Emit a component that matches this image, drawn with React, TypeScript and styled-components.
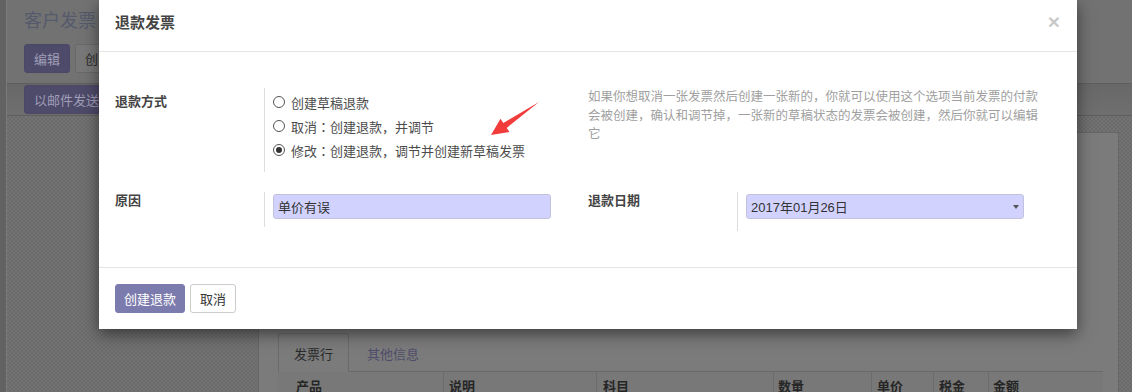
import React from "react";
import styled, { createGlobalStyle } from "styled-components";

const GlobalStyle = createGlobalStyle`
  html, body {
    margin: 0;
    padding: 0;
  }
  body {
    width: 1132px;
    height: 392px;
    overflow: hidden;
    font-family: "Liberation Sans", "Noto Sans CJK SC", sans-serif;
    font-size: 13px;
    color: #4c4c4c;
  }
`;

/* ---------- dimmed page behind the dialog ---------- */

const Page = styled.div`
  position: relative;
  display: flex;
  width: 1132px;
  height: 392px;
  overflow: hidden;
  background: #6f6f6f;
`;

const SideStrip = styled.div`
  flex: none;
  width: 6px;
  background: #626262;
  border-right: 1px solid #7a7a7a;
`;

const Main = styled.div`
  flex: 1;
  min-width: 0;
  display: flex;
  flex-direction: column;
`;

const ControlPanel = styled.div`
  flex: none;
  height: 84px;
  box-sizing: border-box;
  padding: 10px 17px 0;
  background: #727272;
  border-bottom: 1px solid #5e5e5e;
`;

const Breadcrumb = styled.div`
  font-size: 18px;
  line-height: 22px;
  color: #555a6c;
`;

const ButtonRow = styled.div`
  display: flex;
  gap: 5px;
  margin-top: 12px;
`;

const DimButton = styled.div<{ $primary?: boolean }>`
  height: 29px;
  box-sizing: border-box;
  padding: 0 9px;
  display: flex;
  align-items: center;
  border-radius: 3px;
  border: 1px solid ${(p) => (p.$primary ? "#4b4866" : "#686868")};
  background: ${(p) => (p.$primary ? "#4e4b6a" : "#787878")};
  color: ${(p) => (p.$primary ? "#a09eb8" : "#2c2c2c")};
  white-space: nowrap;
`;

const ActionBar = styled.div`
  flex: none;
  height: 32px;
  box-sizing: border-box;
  padding: 1px 17px 0;
  background: linear-gradient(#686868, #6f6f6f);
  border-bottom: 1px solid #5e5e5e;
  display: flex;
`;

const Content = styled.div`
  flex: 1;
  min-height: 0;
  display: flex;
  padding: 16px 13px 0 251px;
  background-color: #6e6e6e;
  background-image: repeating-conic-gradient(#737373 0 25%, #6b6b6b 0 50%);
  background-size: 4px 4px;
`;

const Sheet = styled.div`
  flex: 1;
  background: #7b7b7b;
  border: 1px solid #666;
  border-bottom: none;
  padding: 200px 15px 0 19px;
`;

const Tabs = styled.div`
  display: flex;
  gap: 2px;
  border-bottom: 1px solid #6a6a6a;
`;

const Tab = styled.div<{ $active?: boolean }>`
  height: 39px;
  box-sizing: border-box;
  padding: 0 15px;
  display: flex;
  align-items: center;
  border: 1px solid ${(p) => (p.$active ? "#6a6a6a" : "transparent")};
  border-bottom: none;
  border-radius: 3px 3px 0 0;
  margin-bottom: -1px;
  background: ${(p) => (p.$active ? "#7b7b7b" : "transparent")};
  color: ${(p) => (p.$active ? "#2a2a2a" : "#4f4e6a")};
`;

const TableHead = styled.div`
  display: grid;
  grid-template-columns: 165px 153px 177px 98px 62px 55px 1fr;
  height: 30px;
  background: #787878;
`;

const HeadCell = styled.div<{ $pl: number }>`
  padding-left: ${(p) => p.$pl}px;
  border-left: 1px solid #6c6c6c;
  font-weight: bold;
  color: #262626;
  line-height: 30px;
  &:first-child {
    border-left: none;
  }
`;

/* ---------- refund dialog ---------- */

const Modal = styled.div`
  position: absolute;
  left: 99px;
  top: 0;
  width: 978px;
  background: #fff;
  box-shadow: 0 5px 15px rgba(0, 0, 0, 0.5);
`;

const ModalHeader = styled.div`
  height: 52px;
  box-sizing: border-box;
  padding: 13px 16px 0;
  border-bottom: 1px solid #e5e5e5;
  display: flex;
  justify-content: space-between;
  align-items: flex-start;
`;

const ModalTitle = styled.h4`
  margin: 0;
  font-size: 15px;
  line-height: 20px;
  font-weight: bold;
  color: #444;
`;

const Close = styled.span`
  font-family: "Liberation Sans", sans-serif;
  font-size: 21px;
  font-weight: bold;
  line-height: 17px;
  color: #c9c9c9;
  margin-right: 1px;
`;

const ModalBody = styled.div`
  position: relative;
  padding: 36px 16px;
  display: grid;
  grid-template-columns: 473px 473px;
  row-gap: 20px;
`;

const Group = styled.div`
  display: grid;
  grid-template-columns: 149px 1fr;
  align-items: start;
`;

const Label = styled.div<{ $pt: number }>`
  padding-top: ${(p) => p.$pt}px;
  font-weight: bold;
  line-height: 16px;
  color: #444;
`;

const FieldCell = styled.div<{ $pb: number }>`
  border-left: 1px solid #ddd;
  padding: 2px 0 ${(p) => p.$pb}px 8px;
`;

const RadioRow = styled.div`
  display: flex;
  align-items: center;
  gap: 6px;
  height: 24px;
  white-space: nowrap;
`;

const RadioDot = styled.span<{ $checked?: boolean }>`
  flex: none;
  width: 12px;
  height: 12px;
  box-sizing: border-box;
  border: 1px solid #555;
  border-radius: 50%;
  display: flex;
  align-items: center;
  justify-content: center;
  &::after {
    content: "";
    width: 6px;
    height: 6px;
    border-radius: 50%;
    background: ${(p) => (p.$checked ? "#333" : "transparent")};
  }
`;

/* full-width colon drawn centred, as in the original font */
const Colon = styled.span`
  font-family: "Noto Sans CJK JP", sans-serif;
`;

const Help = styled.div`
  font-size: 12.5px;
  line-height: 18.5px;
  color: #a0a0a0;
  white-space: nowrap;
`;

const TextInput = styled.div`
  width: 278px;
  height: 25px;
  box-sizing: border-box;
  padding: 0 4px;
  display: flex;
  align-items: center;
  justify-content: space-between;
  background: #d2d2ff;
  border: 1px solid #c2c2dc;
  border-radius: 3px;
  color: #333;
`;

const Caret = styled.span`
  width: 0;
  height: 0;
  border-left: 3.5px solid transparent;
  border-right: 3.5px solid transparent;
  border-top: 4px solid #555;
`;

const Arrow = styled.svg`
  position: absolute;
  left: 389px;
  top: 47px;
`;

const ModalFooter = styled.div`
  border-top: 1px solid #e5e5e5;
  padding: 16px;
  display: flex;
  gap: 5px;
`;

const Button = styled.button<{ $primary?: boolean }>`
  height: 29px;
  padding: 0 ${(p) => (p.$primary ? 8 : 9)}px;
  font: inherit;
  border-radius: 3px;
  border: 1px solid ${(p) => (p.$primary ? "#7c7bad" : "#ccc")};
  background: ${(p) => (p.$primary ? "#7c7bad" : "#fff")};
  color: ${(p) => (p.$primary ? "#fff" : "#333")};
`;

const columns = [
  { t: "产品", pl: 18 },
  { t: "说明", pl: 5 },
  { t: "科目", pl: 6 },
  { t: "数量", pl: 4 },
  { t: "单价", pl: 5 },
  { t: "税金", pl: 5 },
  { t: "金额", pl: 4 },
];

export default function App() {
  return (
    <Page>
      <GlobalStyle />
      <SideStrip />
      <Main>
        <ControlPanel>
          <Breadcrumb>客户发票</Breadcrumb>
          <ButtonRow>
            <DimButton $primary>编辑</DimButton>
            <DimButton>创建</DimButton>
          </ButtonRow>
        </ControlPanel>
        <ActionBar>
          <DimButton $primary>以邮件发送</DimButton>
        </ActionBar>
        <Content>
          <Sheet>
            <Tabs>
              <Tab $active>发票行</Tab>
              <Tab>其他信息</Tab>
            </Tabs>
            <TableHead>
              {columns.map((c) => (
                <HeadCell key={c.t} $pl={c.pl}>
                  {c.t}
                </HeadCell>
              ))}
            </TableHead>
          </Sheet>
        </Content>
      </Main>

      <Modal>
        <ModalHeader>
          <ModalTitle>退款发票</ModalTitle>
          <Close>×</Close>
        </ModalHeader>
        <ModalBody>
          <Group>
            <Label $pt={6}>退款方式</Label>
            <FieldCell $pb={10}>
              <RadioRow>
                <RadioDot />
                创建草稿退款
              </RadioRow>
              <RadioRow>
                <RadioDot />
                <span>
                  取消<Colon>：</Colon>创建退款，并调节
                </span>
              </RadioRow>
              <RadioRow>
                <RadioDot $checked />
                <span>
                  修改<Colon>：</Colon>创建退款，调节并创建新草稿发票
                </span>
              </RadioRow>
            </FieldCell>
          </Group>
          <Help>
            如果你想取消一张发票然后创建一张新的，你就可以使用这个选项当前发票的付款
            <br />
            会被创建，确认和调节掉，一张新的草稿状态的发票会被创建，然后你就可以编辑
            <br />
            它
          </Help>

          <Group>
            <Label $pt={1}>原因</Label>
            <FieldCell $pb={8}>
              <TextInput>单价有误</TextInput>
            </FieldCell>
          </Group>
          <Group>
            <Label $pt={1}>退款日期</Label>
            <FieldCell $pb={12}>
              <TextInput>
                2017年01月26日
                <Caret />
              </TextInput>
            </FieldCell>
          </Group>

          <Arrow width="54" height="40" viewBox="0 0 54 40">
            <polygon
              points="51,3 18.7,28.9 21.5,33 3,36 12.5,19.8 15.3,23.9"
              fill="#f23b3b"
            />
          </Arrow>
        </ModalBody>
        <ModalFooter>
          <Button $primary>创建退款</Button>
          <Button>取消</Button>
        </ModalFooter>
      </Modal>
    </Page>
  );
}
